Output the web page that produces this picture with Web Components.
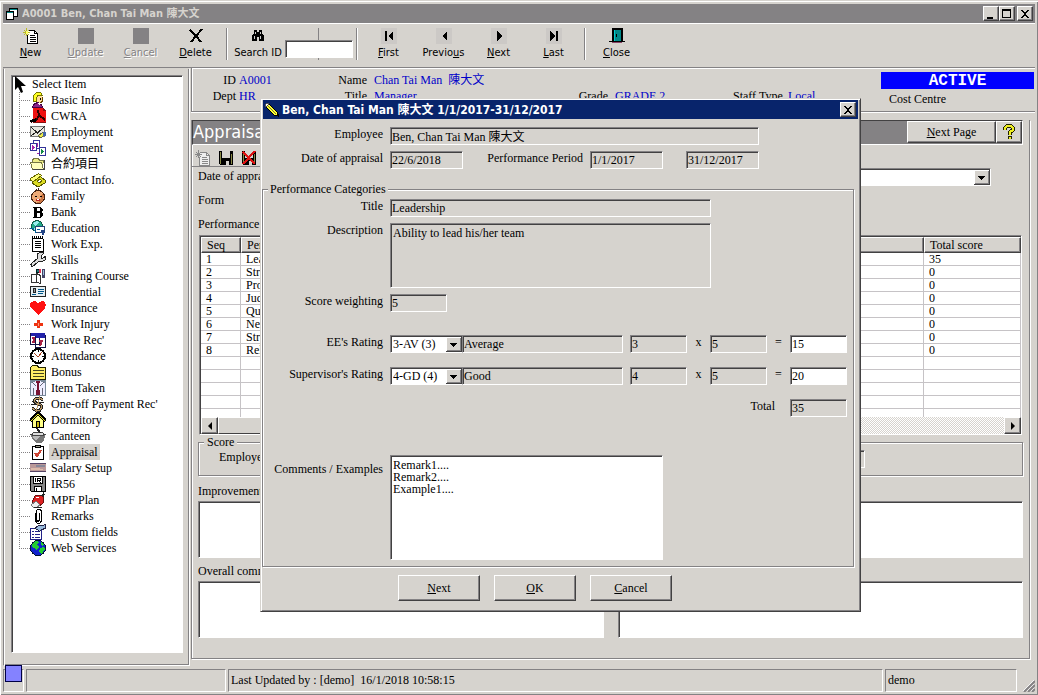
<!DOCTYPE html>
<html lang="en">
<head>
<meta charset="UTF-8">
<meta name="viewport" content="width=device-width, initial-scale=1.0">
<title>A0001 Ben, Chan Tai Man 陳大文</title>
<style>
    html, body {
        margin: 0;
        background: #d6d3ce;
    }
    body {
        --face: #d6d3ce;
        --shadow: #848284;
        --dark: #424142;
        --caption: "DejaVu Sans Condensed", "DejaVu Sans", "Noto Sans CJK TC", sans-serif;
        font: 12px/14px "Liberation Serif", "Noto Sans CJK TC", serif;
        color: #000;
    }
</style>
</head>
<body>
<hr-app></hr-app>

<script>
// shared by every component
const baseStyle = `
    *, *::before, *::after { box-sizing: border-box; }
    input, select, textarea, button { font: inherit; color: inherit; margin: 0; border-radius: 0; }
    input, textarea, select { outline: none; }
    input, textarea {
        display: block;
        min-width: 0;
        padding: 0 1px;
        background: #fff;
        border: 1px solid;
        border-color: var(--shadow) #fff #fff var(--shadow);
        box-shadow: inset 1px 1px var(--dark);
    }
    input { height: 18px; }
    textarea { resize: none; line-height: 12px; padding: 3px 2px; overflow: hidden; }
    [readonly] { background: var(--face); }
    button {
        padding: 0;
        background: var(--face);
        border: 1px solid;
        border-color: #fff var(--dark) var(--dark) #fff;
        box-shadow: inset -1px -1px var(--shadow);
    }
    fieldset {
        margin: 0;
        min-width: 0;
        border: 1px solid var(--shadow);
        box-shadow: 1px 1px #fff, inset 1px 1px #fff;
    }
    legend { background: var(--face); }
    svg { display: block; flex: none; }
`;

// 16x16 drawings
const icons = {
    app: `<path fill="#fff" d="M5 2h9v9H5zM2 5h8v9H2z"/><path fill="none" stroke="#000" d="M5.500 5V2.500h8v8H10M2.500 5.500h7v8h-7z"/><path fill="#088" d="M6 3h7v1H6zM3 6h6v1H3z"/>`,
    pencil: `<path fill="#ff3" stroke="#000" d="M2 5l3-3 8 8 1 4-4-1z"/><path fill="none" stroke="#773" d="M4 4l8 8"/><path fill="#fff" stroke="#555" d="M1 3l2-2 2 1-3 3z"/><path d="M12 13l3-1v3z"/>`,
    newdoc: `<path fill="#fff" stroke="#000" d="M5.500 2.500h6l3 3v10h-10v-9"/><path fill="none" stroke="#000" d="M11.500 2.500v3h3M7 7.500h5M7 9.500h6M7 11.500h6M7 13.500h6"/><path stroke="#bb2" d="M3.500 0v8M0 4.500h7M1 2l5 5M6 2L1 7"/><path fill="#ff6" d="M3 3h2v3H3z"/>`,
    newoff: `<path fill="#eee" stroke="#888" d="M5.500 2.500h6l3 3v10h-10v-9"/><path fill="none" stroke="#888" d="M11.500 2.500v3h3M7 7.500h5M7 9.500h6M7 11.500h6M7 13.500h6M3.500 0v8M0 4.500h7M1 2l5 5M6 2L1 7"/>`,
    blank: `<path fill="#848284" d="M0 0h16v16H0z"/><path fill="none" stroke="#fff" d="M16 0v16H0"/>`,
    del: `<path fill="none" stroke="#000" stroke-width="2" d="M2 2l3 3 3 3 5 6M14 1L8 8l-5 6"/>`,
    find: `<path d="M4 2h3v2h2V2h3v3l2 3v5h-5V9H7v4H2V8l2-3z"/><path stroke="#ccc" d="M5.500 4v2M4.500 8v3M10.500 4v2M10.500 8v3"/>`,
    first: `<path fill="#ccc9c6" d="M0 0h16v16H0z"/><path d="M4 3h2v10H4zM12 3v10L7 8z"/>`,
    prev: `<path fill="#ccc9c6" d="M0 0h16v16H0z"/><path d="M11 3v10L6 8z"/>`,
    next: `<path fill="#ccc9c6" d="M0 0h16v16H0z"/><path d="M6 3v10l5-5z"/>`,
    last: `<path fill="#ccc9c6" d="M0 0h16v16H0z"/><path d="M4 3v10l5-5zM10 3h2v10h-2z"/>`,
    door: `<path fill="#000" d="M3 0h11v13h2v1H0v-1h3z"/><path fill="#088" d="M5 2h7v11H5z"/><path fill="#0cc" d="M5 2h1v11H5z"/><path fill="#000" d="M7 6h1v3H7z"/><path fill="#846" d="M3 14h10v1H3z"/>`,
    save: `<path d="M1 1h14v14H2l-1-1z"/><path fill="#884" d="M2 2h1v12H2zM13 4h1v10h-1z"/><path fill="#d6d3ce" d="M4 1h8v7H4zM8 11h3v4H8z"/>`,
    savex: `<path d="M1 1h14v14H2l-1-1z"/><path fill="#884" d="M2 2h1v12H2zM13 4h1v10h-1z"/><path fill="#d6d3ce" d="M4 1h8v7H4zM8 11h3v4H8z"/><path fill="none" stroke="#d11" stroke-width="2" d="M2 2l12 12M14 1L2 14"/>`,
    help: `<path fill="none" stroke="#220" stroke-width="4" d="M4 6V4l2-2h4l2 2v2L9 8v3M9 12v3"/><path fill="none" stroke="#ee2" stroke-width="2" d="M4 6V4l2-2h4l2 2v2L9 8v3M9 13v2"/>`,
    arrow: `<path d="M2 0v14l3-3 3 6 2-1-2-6h5z"/>`,
    person: `<path fill="#fd9" d="M6 3h5l2 3v3l-2 2H7z"/><path fill="none" stroke="#640" d="M12.500 5v4l-2 2"/><path fill="#ff2" stroke="#770" d="M3.500 9.500v-6l3-3h4l2 3H8L6.500 6v4z"/><path fill="#828" stroke="#404" d="M2.500 15.500l1-3 4-2 4 2 1 3z"/><path fill="#fff" d="M7 11h4l-1 3z"/><path d="M10 6h1v2h-1z"/>`,
    pdf: `<path fill="#e11" d="M3 0h11l2 3v11H3z"/><path fill="#811" d="M3 14h13v1H3zM13 0v3h3z"/><path fill="none" stroke="#300" stroke-width="2" d="M8 2l1 5 6 5M9 8l-3 4-5 2"/><path d="M0 12l6-2v4H0z"/>`,
    mail: `<path fill="#e8e8e0" stroke="#777" d="M.500 2.500h14v10H.500z"/><path fill="none" stroke="#222" d="M1 3l6.500 6L15 2M1 12l5-4"/><path fill="#ee4" stroke="#664" d="M8 12l5-4 1 3-3 3z"/><path fill="#46a" d="M13 8h3v4h-3z"/>`,
    move: `<path fill="#fff" stroke="#339" d="M3.500.500h6v8h-6z"/><path fill="#fff" stroke="#339" d="M.500 3.500h6v7h-6zM9.500 7.500h6v8h-6z"/><path fill="#a2a" d="M2 5l3 2-3 3z"/><path fill="#184" d="M11 9l3 3-3 2z"/><path fill="none" stroke="#a2a" d="M7.500 3v4M7 13.500h2"/>`,
    folder: `<path fill="#ee8" stroke="#774" d="M2.500 12.500V4L4 2.500h4L9.500 4h4v3"/><path fill="#ffb" stroke="#774" d="M2.500 13.500L.500 6.500h11l2 7z"/><path fill="#444" d="M14 4h1v10H3v-1h11z"/>`,
    phone: `<path fill="#dd2" stroke="#550" d="M2 8l6-5 7 5v3l-7 4-6-4z"/><path fill="#ff7" stroke="#660" d="M.500 6.500l8-5 3 2-8 6-3-1z"/><path fill="#fff" stroke="#660" d="M7 9l3-2 2 2-3 2z"/>`,
    baby: `<ellipse cx="8" cy="9" rx="6.500" ry="6.500" fill="#ea7" stroke="#421"/><path fill="#c74" d="M12 5l2 3-1 4-3 3H6l4-2z"/><path fill="none" stroke="#421" d="M8.500 3V0M6 1.500l2 1"/><path d="M5 8h2v1H5zM10 8h2v1h-2z"/><path fill="#b22" d="M6 11h4v2H6z"/><path fill="#fff" d="M7 11h2v1H7z"/>`,
    bold: `<path d="M3 3h7l3 2v2l-2 1 2 2v2l-3 2H3v-1l1-1V5L3 4z"/><path fill="#fff" d="M7 4h2l1 1v1L9 7H7zM7 9h2l1 1v2l-1 1H7z"/>`,
    globecard: `<circle cx="7" cy="6" r="5.500" fill="#2a8" stroke="#154"/><path fill="#9ee" d="M3 3l4-2 2 2-4 3zM2 8h4l-2 3z"/><path fill="#fff" stroke="#247" d="M5.500 6.500h9v6h-9z"/><path fill="none" stroke="#069" d="M0 8.500h3l3 4M7 9.500h3"/><path fill="#248" d="M11 10h3v5h-2z"/>`,
    notepad: `<path fill="#fff" stroke="#000" d="M2.500 2.500h10l1 1v12h-11z"/><path stroke="#000" stroke-dasharray="1 1" stroke-width="2" d="M2 1h12"/><path stroke="#000" d="M5 5.500h6M5 7.500h6M5 9.500h6M5 11.500h6"/>`,
    wrench: `<path fill="none" stroke="#222" stroke-width="4" d="M1 14l7-6"/><path fill="#ddd" stroke="#222" d="M7 2l4-2 3 1-3 3v2h2l3-2-1 4-4 2-4-1z"/><path stroke="#ddd" stroke-width="2" d="M2 13l6-5"/>`,
    train: `<path fill="#fff" stroke="#333" d="M1.500 6.500h5v8h-5zM6.500 5.500l4 2v8l-4-1z"/><path fill="#277" stroke="#022" d="M6.500 1.500h4v3h-4z"/><path fill="#d35" d="M9 1h2v4H9z"/><path fill="#446" d="M12 1h3v9h-3z"/><path fill="#9bd" d="M13 2h1v5h-1z"/>`,
    card: `<path fill="#e4eef2" stroke="#222" d="M.500 2.500h15v10H.500z"/><path fill="#999" stroke="#222" d="M3.500 4.500h2v4h-2z"/><path stroke="#058" d="M8 5.500h6M8 7.500h6M8 9.500h5M2 10.500h4"/>`,
    heart: `<path fill="#f11" d="M8 15L1 8 0 5l1-3 3-1 3 1 1 2 1-2 3-1 3 1 1 3-1 3z"/>`,
    cross: `<path fill="#e31" d="M7 4h3v3h3v3h-3v2H7v-2H4V7h3z"/><path fill="#f97" d="M8 7h1v3H8z"/>`,
    cal: `<path fill="#fff" stroke="#114" d="M.500 1.500h9v11h-9zM5.500 3.500h10v12h-10z"/><path fill="#22a" d="M1 1h14v3H1zM6 4h9v2H6z"/><path fill="none" stroke="#a24" stroke-width="2" d="M2 6h2v4H2M9 9h3l-2 5"/>`,
    clock: `<circle cx="8" cy="8" r="7" fill="#fff" stroke="#000" stroke-width="2"/><path fill="none" stroke="#a42" d="M4 5l4 4 4-5"/><path stroke="#000" d="M8 2v2M8 12v2M2 8h2M12 8h2"/>`,
    yfolder: `<path fill="#fe6" stroke="#220" d="M.500 3.500l2-2h5l1 2h7v12H.500z"/><path stroke="#442" d="M3 6.500h11M3 9.500h11M3 12.500h11"/>`,
    shirt: `<path fill="#789" d="M0 0h16v16H0z"/><path fill="#eef" d="M1 3l5-2h4l5 2v12H1z"/><path fill="#713" d="M6 1h4l-1 4 1 10H6l1-10z"/><path fill="none" stroke="#667" d="M3.500 8v7M12.500 8v7M2 2l4 4M14 2l-4 4"/>`,
    dollar: `<path fill="none" stroke="#222" stroke-width="3" d="M13 4l-3-2H6L4 5l2 2 5 2 1 2-2 3H5l-3-2"/><path fill="none" stroke="#b96" d="M13 4l-3-2H6L4 5l2 2 5 2 1 2-2 3H5l-3-2M10 0L6 16"/><path stroke="#222" d="M1 8h5M9 6h5"/>`,
    house: `<path fill="#ff8" stroke="#000" d="M2.500 8v7.500h11V8L8 3z"/><path fill="none" stroke="#000" stroke-width="3" d="M0 9l8-8 8 8"/><path fill="none" stroke="#ee2" d="M1 9l7-7 7 7"/><path fill="#cb1" stroke="#000" d="M6.500 9.500h3v6h-3z"/>`,
    bowl: `<path fill="#777" d="M1 6h15l-2 6-3 3H6l-4-4z"/><path fill="#bbb" d="M3 8h7l-4 4-2-1z"/><path fill="#ddd" stroke="#444" d="M1 6.500l3-2h8l3 2-3 1H4z"/><path stroke="#222" stroke-width="2" d="M7 0l3 5"/>`,
    check: `<path fill="#fff" stroke="#000" d="M2.500 2.500h11v13h-11z"/><path fill="#998" stroke="#000" d="M5.500 1.500h5v2h-5z"/><path fill="none" stroke="#c43" stroke-width="2" d="M5 9l2 3 4-6"/>`,
    photo: `<path fill="#b99" d="M0 3h16v9H0z"/><path fill="#546" d="M0 3h16v1H0zM0 11h16v1H0z"/><path fill="#dba" d="M1 8h8l5 2H1z"/><path fill="#889" d="M6 5h9v2H6z"/>`,
    disk: `<path fill="#888" stroke="#000" d="M.500.500h15v15h-14l-1-1z"/><path fill="#fff" stroke="#000" d="M3.500.500h9v7h-9zM4.500 10.500h7v5h-7z"/><path fill="none" stroke="#000" d="M5.500 2v4M7.500 6V2.500h3v2H8l3 2M6.500 12v3"/>`,
    bird: `<path fill="#d22" stroke="#611" d="M2 10l3-6 6-1 3 3-1 5-5 4-4-1z"/><path fill="#eee" stroke="#777" d="M1 13l5-4 4 4-3 2H3z"/><path fill="#fff" d="M6 5h3v1H6z"/><path fill="none" stroke="#222" d="M10 4l5-2M13.500 0v5M4 15.500h8"/>`,
    clip: `<path fill="none" stroke="#000" d="M5.500 5v8l2 2.500h2l2-2.500V3l-1.500-2h-2L6.500 3v9l1 1h1l1-1V5"/>`,
    custom: `<path fill="#fff" stroke="#228" d="M.500 4.500h11v11H.500z"/><path stroke="#228" d="M2 7.500h2M5 7.500h5M2 10.500h2M5 10.500h5M2 13.500h2M5 13.500h5"/><path fill="#9bd" stroke="#224" d="M4.500 4.500l4-3h4l3-1v4l-4 1-2 2-2-2z"/>`,
    globe: `<circle cx="8" cy="8" r="7.500" fill="#12c" stroke="#013"/><path fill="#2c3" d="M2 4l4-3 3 1-2 3 2 2-2 3-3-2-2-1zM10 8l4-1 1 2-3 5-3-2zM11 2l3 2-1 2-2-1z"/>`,
};

const icon = name =>
    `<svg width="16" height="16" viewBox="0 0 16 16" shape-rendering="crispEdges" aria-hidden="true">${icons[name]}</svg>`;

const dropArrow = `<svg class="drop" width="16" height="15" viewBox="0 0 16 15" shape-rendering="crispEdges" aria-hidden="true">
    <path fill="#d6d3ce" d="M0 0h16v15H0z"/><path fill="#fff" d="M0 0h15v1H1v13H0z"/>
    <path fill="#848284" d="M14 1h1v13H1v-1h13z"/><path fill="#424142" d="M15 0h1v15H0v-1h15z"/><path d="M4 6h7v1h-1v1H9v1H8v1H7V9H6V8H5V7H4z"/></svg>`;

const comboStyle = `
    .combo { display: grid; }
    .combo select {
        grid-area: 1 / 1;
        width: 100%;
        height: 18px;
        appearance: none;
        padding: 0 18px 0 2px;
        background: #fff;
        border: 1px solid;
        border-color: var(--shadow) #fff #fff var(--shadow);
        box-shadow: inset 1px 1px var(--dark);
    }
    .combo .drop { grid-area: 1 / 1; place-self: center end; margin-right: 1px; pointer-events: none; }
`;

function define(name, css, html, ready) {
    const template = document.createElement('template');
    template.innerHTML = `<style>${baseStyle}${css}</style>${html}`;
    customElements.define(name, class extends HTMLElement {
        constructor() {
            super();
            this.attachShadow({mode: 'open'});
            this.shadowRoot.appendChild(template.content.cloneNode(true));
        }
        connectedCallback() {
            if (ready) ready(this, this.shadowRoot);
        }
    });
}

// caption bar, used by the window and the dialog
define('title-bar', `
    :host {
        display: flex;
        align-items: center;
        height: 19px;
        padding: 0 2px 0 1px;
        background: var(--shadow);
        color: var(--face);
        font: bold 11px/16px var(--caption);
    }
    :host([active]) { background: #08246b; color: #fff; font-size: 12px; }
    .text { flex: 1; margin-left: 2px; white-space: nowrap; overflow: hidden; }
    .buttons { display: flex; }
    button { width: 16px; height: 15px; color: #000; }
    button:last-child { margin-left: 2px; }
    :host([active]) .size { display: none; }
`, `
    <span class="icon"></span>
    <span class="text"><slot></slot></span>
    <span class="buttons">
        <button class="size" aria-label="Minimize"><svg width="14" height="12" viewBox="0 0 14 12"><path d="M3 9h6v2H3z"/></svg></button>
        <button class="size" aria-label="Maximize"><svg width="14" height="12" viewBox="0 0 14 12" shape-rendering="crispEdges"><path d="M2 1h9v9H2zm1 2v6h7V3z" fill-rule="evenodd"/></svg></button>
        <button aria-label="Close"><svg width="14" height="12" viewBox="0 0 14 12" shape-rendering="crispEdges"><path d="M3 2h2v1h1v1h2V3h1V2h2v1h-1v1H9v1H8v2h1v1h1v1h1v1H9V9H8V8H6v1H5v1H3V9h1V8h1V7h1V5H5V4H4V3H3z"/></svg></button>
    </span>
`, (host, root) => {
    root.querySelector('.icon').innerHTML = icon(host.getAttribute('icon'));
});

define('tool-button', `
    :host { display: block; width: 55px; }
    button {
        display: flex;
        flex-direction: column;
        align-items: center;
        gap: 2px;
        width: 100%;
        border: 0;
        box-shadow: none;
        font: 11px/14px var(--caption);
    }
    button:disabled { color: var(--shadow); text-shadow: 1px 1px #fff; }
`, `<button><span class="icon"></span><span><slot></slot></span></button>`, (host, root) => {
    root.querySelector('.icon').innerHTML = icon(host.getAttribute('icon'));
    root.querySelector('button').disabled = host.hasAttribute('disabled');
});

define('tool-bar', `
    :host {
        display: flex;
        height: 45px;
        padding-top: 4px;
        border-top: 1px solid #fff;
        border-bottom: 1px solid var(--shadow);
    }
    .sep { width: 2px; height: 32px; margin: 0 3px; background: linear-gradient(90deg, var(--shadow) 50%, #fff 50%); }
    .search { display: flex; }
    .box {
        width: 68px;
        height: 32px;
        padding-top: 12px;
        background: linear-gradient(var(--shadow), var(--shadow)) 33px 0 / 1px 100% no-repeat;
    }
    .box input { width: 100%; }
    .search label { display: flex; flex-direction: column; align-items: center; gap: 2px; width: 54px; white-space: nowrap; font: 11px/14px var(--caption); }
`, `
    <tool-button icon="newdoc"><u>N</u>ew</tool-button>
    <tool-button icon="blank" disabled><u>U</u>pdate</tool-button>
    <tool-button icon="blank" disabled><u>C</u>ancel</tool-button>
    <tool-button icon="del"><u>D</u>elete</tool-button>
    <span class="sep"></span>
    <div class="search">
        <label for="search">${icon('find')}<span>Search ID</span></label>
        <div class="box"><input id="search" type="text"></div>
    </div>
    <span class="sep"></span>
    <tool-button icon="first"><u>F</u>irst</tool-button>
    <tool-button icon="prev">Previo<u>u</u>s</tool-button>
    <tool-button icon="next"><u>N</u>ext</tool-button>
    <tool-button icon="last"><u>L</u>ast</tool-button>
    <span class="sep"></span>
    <tool-button icon="door"><u>C</u>lose</tool-button>
`);

define('tree-item', `
    :host { display: block; padding-left: 7px; }
    a { display: flex; height: 16px; line-height: 16px; color: inherit; text-decoration: none; white-space: nowrap; }
    .branch {
        width: 11px;
        background:
            repeating-linear-gradient(#848284 0 1px, transparent 1px 2px) 0 0 / 1px 100% no-repeat,
            repeating-linear-gradient(90deg, #848284 0 1px, transparent 1px 2px) 0 8px / 100% 1px no-repeat;
    }
    :host(:last-of-type) .branch { background-size: 1px 8px, 100% 1px; }
    .text { margin-left: 3px; padding: 0 2px; }
    :host([selected]) .text { background: var(--face); }
`, `<a href="#"><span class="branch"></span><span class="icon"></span><span class="text"><slot></slot></span></a>`, (host, root) => {
    root.querySelector('.icon').innerHTML = icon(host.getAttribute('icon'));
});

define('tree-view', `
    :host {
        display: block;
        width: 187px;
        padding: 6px 6px 12px 7px;
        border: 1px solid;
        border-color: transparent #fff #fff var(--shadow);
        box-shadow: inset 1px 0 #fff, inset -1px -1px var(--shadow);
    }
    nav {
        height: 100%;
        background: #fff;
        border: 1px solid;
        border-color: var(--shadow) #fff #fff var(--shadow);
        box-shadow: inset 1px 1px var(--dark);
    }
    .root { display: flex; gap: 3px; height: 16px; padding-left: 1px; line-height: 16px; }
`, `<nav><div class="root"><svg width="16" height="17" viewBox="0 0 16 17" aria-hidden="true">${icons.arrow}</svg><span>Select Item</span></div><slot></slot></nav>`);

define('employee-header', `
    :host {
        display: flex;
        height: 44px;
        padding: 4px 1px 0 0;
        border-left: 1px solid var(--shadow);
        border-bottom: 1px solid var(--shadow);
        box-shadow: inset 1px 1px #fff, 0 1px #fff;
    }
    dl {
        display: grid;
        grid-template-columns: 44px 95px 30px 201px 34px 119px 48px 70px;
        grid-auto-rows: 16px;
        gap: 0 3px;
        align-content: start;
        margin: 0;
        flex: 1;
        line-height: 16px;
        white-space: nowrap;
    }
    dt { text-align: right; }
    dt.first { grid-column: 1; }
    dd { margin: 0; color: #0000c8; white-space: pre; }
    dd.wide { padding-left: 4px; }
    .grade { grid-column: 5; }
    .status { width: 153px; }
    .status strong {
        display: block;
        height: 17px;
        background: #00f;
        color: #fff;
        font: bold 16px/18px "Liberation Mono", monospace;
        text-align: center;
    }
    .status span { display: block; padding: 3px 8px; }
`, `
    <dl>
        <dt>ID</dt><dd>A0001</dd><dt>Name</dt><dd class="wide">Chan Tai Man  陳大文</dd>
        <dt class="first">Dept</dt><dd>HR</dd><dt>Title</dt><dd class="wide">Manager</dd>
        <dt class="grade">Grade</dt><dd class="wide">GRADE 2</dd><dt>Staff Type</dt><dd class="wide">Local</dd>
    </dl>
    <div class="status"><strong>ACTIVE</strong><span>Cost Centre</span></div>
`);

const scores = [
    [1, 'Leadership', 35], [2, 'Strategic thinking', 0], [3, 'Problem solving', 0], [4, 'Judgement', 0],
    [5, 'Quality of work', 0], [6, 'Negotiation', 0], [7, 'Stress tolerance', 0], [8, 'Relationship', 0],
    ['', '', ''], ['', '', ''], ['', '', ''], ['', '', ''],
];

define('score-table', `
    :host {
        display: block;
        background: #fff;
        border: 1px solid;
        border-color: var(--shadow) #fff #fff var(--shadow);
        box-shadow: inset 1px 1px var(--dark);
        padding: 1px 0 0 1px;
    }
    table { width: 100%; table-layout: fixed; border-collapse: separate; border-spacing: 0; }
    th, td { padding: 0 5px; text-align: left; font-weight: normal; overflow: hidden; white-space: nowrap; }
    th { height: 16px; line-height: 14px; background: var(--face); border: 1px solid; border-color: #fff var(--dark) var(--dark) #fff; box-shadow: inset -1px -1px var(--shadow); }
    td { height: 13px; line-height: 12px; border: 1px solid #c6c3c6; border-width: 0 1px 1px 0; }
    tr.cut td { height: 8px; border-bottom: 0; }
    .seq { width: 40px; }
    .total { width: 97px; }
    .scroll {
        display: flex;
        height: 17px;
        background: repeating-conic-gradient(#d6d3ce 0 25%, #fff 0 50%) 0 0 / 2px 2px;
    }
    .scroll button { width: 17px; display: grid; place-items: center; }
    .thumb { width: 480px; background: var(--face); border: 1px solid; border-color: #fff var(--dark) var(--dark) #fff; }
    .scroll button:last-child { margin-left: auto; }
`, `
    <table>
        <colgroup><col class="seq"><col><col class="total"></colgroup>
        <thead><tr><th>Seq</th><th>Performance Categories</th><th>Total score</th></tr></thead>
        <tbody>${scores.map(r => `<tr><td>${r[0]}</td><td>${r[1]}</td><td>${r[2]}</td></tr>`).join('')}
        <tr class="cut"><td></td><td></td><td></td></tr></tbody>
    </table>
    <div class="scroll">
        <button aria-label="Scroll left"><svg width="8" height="8" viewBox="0 0 8 8"><path d="M6 0v8L2 4z"/></svg></button>
        <span class="thumb"></span>
        <button aria-label="Scroll right"><svg width="8" height="8" viewBox="0 0 8 8"><path d="M2 0v8l4-4z"/></svg></button>
    </div>
`);

define('appraisal-page', `
    :host {
        display: block;
        margin: 8px 5px 0 0;
        border: 1px solid var(--shadow);
        border-top: 0;
        box-shadow: 1px 1px #fff, inset 1px 0 #fff;
    }
    .bar {
        display: flex;
        height: 25px;
        margin-right: 6px;
        background: var(--shadow);
        border: 1px solid;
        border-color: var(--dark) #fff #fff var(--dark);
    }
    h1 { flex: 1; margin: 0; color: #fff; font: 18px/22px var(--caption); }
    .bar button { width: 89px; height: 22px; }
    .bar button.help { display: grid; place-items: center; width: 26px; }
    .tools { display: flex; gap: 7px; width: 300px; height: 22px; padding: 5px 3px 0; border-bottom: 1px solid var(--shadow); }
    .tools button { border: 0; box-shadow: none; }
    .form { padding: 1px 6px 20px; }
    .row { display: flex; height: 24px; align-items: flex-start; }
    .row label, .row span.label { width: 114px; padding-top: 1px; white-space: nowrap; }
    .combo { flex: 1; max-width: 679px; }
    score-table { margin: -5px 1px 0; }
    .form fieldset { height: 41px; margin: 0 0 7px; padding: 1px 20px 0; }
    legend { margin-left: -15px; padding: 0 3px; line-height: 14px; }
    .score { display: flex; gap: 7px; }
    .score input { width: 590px; }
    .pair { display: grid; grid-template-columns: 1fr 1fr; gap: 14px; }
    .pair textarea { width: 100%; height: 57px; }
    .caption { display: block; height: 18px; padding-top: 1px; }
    .caption + .pair + .caption { margin-top: 5px; }
    ${comboStyle}
`, `
    <div class="bar"><h1>Appraisal</h1><button><u>N</u>ext Page</button><button class="help" aria-label="Help">${icon('help')}</button></div>
    <div class="tools">
        <button disabled aria-label="New appraisal">${icon('newoff')}</button>
        <button aria-label="Save appraisal">${icon('save')}</button>
        <button aria-label="Delete appraisal">${icon('savex')}</button>
    </div>
    <div class="form">
        <div class="row"><label for="date">Date of appraisal</label><span class="combo"><select id="date"><option></option></select>${dropArrow}</span></div>
        <div class="row"><span class="label">Form</span></div>
        <div class="row"><span class="label">Performance</span></div>
        <score-table></score-table>
        <fieldset><legend>Score</legend><div class="score"><label for="employee">Employee</label><input id="employee" readonly></div></fieldset>
        <label class="caption" for="improve">Improvement</label>
        <div class="pair"><textarea id="improve"></textarea><textarea aria-label="Improvement, supervisor"></textarea></div>
        <label class="caption" for="overall">Overall comments</label>
        <div class="pair"><textarea id="overall"></textarea><textarea aria-label="Overall comments, supervisor"></textarea></div>
    </div>
`);

define('appraisal-dialog', `
    :host {
        display: block;
        width: 601px;
        background: var(--face);
        border: 1px solid;
        border-color: var(--face) var(--dark) var(--dark) var(--face);
        box-shadow: inset 1px 1px #fff, inset -1px -1px var(--shadow);
        padding: 1px;
    }
    title-bar { margin: 0 1px; }
    .head { padding-top: 8px; }
    .row { display: flex; align-items: flex-start; margin-bottom: 6px; }
    .row > label { flex: none; width: 121px; margin-right: 7px; text-align: right; }
    .row > label.period { width: 120px; }
    .row > i { font-style: normal; text-align: center; width: 23px; }
    fieldset { margin: 13px 5px 0 0; padding: 3px 0 6px; }
    fieldset .row > label { width: 120px; }
    legend { margin-left: 5px; padding: 0 2px; }
    .date { width: 73px; }
    .date + .date { margin-left: 23px; }
    .name { width: 369px; }
    .wide { width: 321px; }
    textarea.wide { height: 65px; }
    .short { width: 57px; }
    .grade { width: 161px; margin-right: 7px; }
    .combo { width: 73px; margin-right: -1px; }
    .rating { margin: 0 0 14px; }
    .weight { margin-bottom: 23px; }
    .row.total { justify-content: flex-end; margin: 0 6px 38px 0; }
    .row.total label { width: auto; margin-right: 15px; }
    .row.remarks { margin-bottom: 0; }
    .remarks label { padding-top: 7px; }
    .remarks textarea { width: 273px; height: 105px; }
    .buttons { display: flex; gap: 14px; padding: 8px 0 9px 136px; }
    .buttons button { width: 82px; height: 26px; }
    ${comboStyle}
`, `
    <title-bar icon="pencil" active>Ben, Chan Tai Man 陳大文 1/1/2017-31/12/2017</title-bar>
    <div class="head">
        <div class="row"><label for="name">Employee</label><input id="name" class="name" readonly value="Ben, Chan Tai Man 陳大文"></div>
        <div class="row">
            <label for="adate">Date of appraisal</label><input id="adate" class="date" readonly value="22/6/2018">
            <label class="period" for="from">Performance Period</label><input id="from" class="date" readonly value="1/1/2017">
            <input class="date" aria-label="Performance Period end" readonly value="31/12/2017">
        </div>
    </div>
    <fieldset>
        <legend>Performance Categories</legend>
        <div class="row"><label for="title">Title</label><input id="title" class="wide" readonly value="Leadership"></div>
        <div class="row"><label for="desc">Description</label><textarea id="desc" class="wide" readonly>Ability to lead his/her team</textarea></div>
        <div class="row weight"><label for="weight">Score weighting</label><input id="weight" class="short" readonly value="5"></div>
        <div class="row rating">
            <label for="ee">EE's Rating</label>
            <span class="combo"><select id="ee"><option>3-AV (3)</option></select>${dropArrow}</span>
            <input class="grade" aria-label="Rating name" readonly value="Average">
            <input class="short" aria-label="Rating" readonly value="3"><i>x</i>
            <input class="short" aria-label="Weight" readonly value="5"><i>=</i>
            <input class="short" aria-label="Score" value="15">
        </div>
        <div class="row rating">
            <label for="sup">Supervisor's Rating</label>
            <span class="combo"><select id="sup"><option>4-GD (4)</option></select>${dropArrow}</span>
            <input class="grade" aria-label="Rating name" readonly value="Good">
            <input class="short" aria-label="Rating" readonly value="4"><i>x</i>
            <input class="short" aria-label="Weight" readonly value="5"><i>=</i>
            <input class="short" aria-label="Score" value="20">
        </div>
        <div class="row total"><label for="total">Total</label><input id="total" class="short" readonly value="35"></div>
        <div class="row remarks"><label for="remarks">Comments / Examples</label><textarea id="remarks">Remark1....
Remark2....
Example1....</textarea></div>
    </fieldset>
    <div class="buttons"><button><u>N</u>ext</button><button><u>O</u>K</button><button><u>C</u>ancel</button></div>
`, (host, root) => {
    const remarks = root.getElementById('remarks');
    remarks.focus();
    remarks.setSelectionRange(remarks.value.length, remarks.value.length);
});

define('status-bar', `
    :host { display: flex; gap: 2px; height: 23px; padding-right: 18px; position: relative; }
    span {
        padding: 0 2px;
        line-height: 21px;
        white-space: pre;
        border: 1px solid;
        border-color: var(--shadow) #fff #fff var(--shadow);
    }
    .mark { width: 21px; }
    .empty { width: 200px; }
    .updated { flex: 1; }
    .user { width: 132px; }
    .square { position: absolute; left: 2px; top: -4px; width: 17px; height: 17px; background: #8482ff; border: 1px solid #004; }
    svg { position: absolute; right: 0; bottom: 0; }
`, `
    <span class="mark"></span><span class="empty"></span>
    <span class="updated">Last Updated by : [demo]  16/1/2018 10:58:15</span>
    <span class="user">demo</span>
    <i class="square"></i>
    <svg width="12" height="12" viewBox="0 0 12 12" aria-hidden="true"><path stroke="#fff" d="M0 11L11 0M4 11l7-7M8 11l3-3"/><path stroke="#848284" stroke-width="2" d="M1 12L12 1M5 12l7-7M9 12l3-3"/></svg>
`);

define('hr-app', `
    :host {
        box-sizing: border-box;
        display: flex;
        flex-direction: column;
        min-height: 100vh;
        padding: 4px 3px 3px;
        background: var(--face);
        box-shadow: inset 0 1px var(--face), inset 1px 2px #fff, inset -1px -1px var(--shadow), inset -2px -2px var(--face);
    }
    .work { flex: 1; display: flex; position: relative; }
    main { flex: 1; min-width: 0; padding-left: 1px; }
    appraisal-dialog { position: absolute; left: 257px; top: 30px; }
    status-bar { margin-top: 3px; }
`, `
    <title-bar icon="app">A0001 Ben, Chan Tai Man 陳大文</title-bar>
    <tool-bar></tool-bar>
    <div class="work">
        <tree-view>
            <tree-item icon="person">Basic Info</tree-item>
            <tree-item icon="pdf">CWRA</tree-item>
            <tree-item icon="mail">Employment</tree-item>
            <tree-item icon="move">Movement</tree-item>
            <tree-item icon="folder">合約項目</tree-item>
            <tree-item icon="phone">Contact Info.</tree-item>
            <tree-item icon="baby">Family</tree-item>
            <tree-item icon="bold">Bank</tree-item>
            <tree-item icon="globecard">Education</tree-item>
            <tree-item icon="notepad">Work Exp.</tree-item>
            <tree-item icon="wrench">Skills</tree-item>
            <tree-item icon="train">Training Course</tree-item>
            <tree-item icon="card">Credential</tree-item>
            <tree-item icon="heart">Insurance</tree-item>
            <tree-item icon="cross">Work Injury</tree-item>
            <tree-item icon="cal">Leave Rec'</tree-item>
            <tree-item icon="clock">Attendance</tree-item>
            <tree-item icon="yfolder">Bonus</tree-item>
            <tree-item icon="shirt">Item Taken</tree-item>
            <tree-item icon="dollar">One-off Payment Rec'</tree-item>
            <tree-item icon="house">Dormitory</tree-item>
            <tree-item icon="bowl">Canteen</tree-item>
            <tree-item icon="check" selected>Appraisal</tree-item>
            <tree-item icon="photo">Salary Setup</tree-item>
            <tree-item icon="disk">IR56</tree-item>
            <tree-item icon="bird">MPF Plan</tree-item>
            <tree-item icon="clip">Remarks</tree-item>
            <tree-item icon="custom">Custom fields</tree-item>
            <tree-item icon="globe">Web Services</tree-item>
        </tree-view>
        <main>
            <employee-header></employee-header>
            <appraisal-page></appraisal-page>
        </main>
        <appraisal-dialog></appraisal-dialog>
    </div>
    <status-bar></status-bar>
`);
</script>
</body>
</html>
